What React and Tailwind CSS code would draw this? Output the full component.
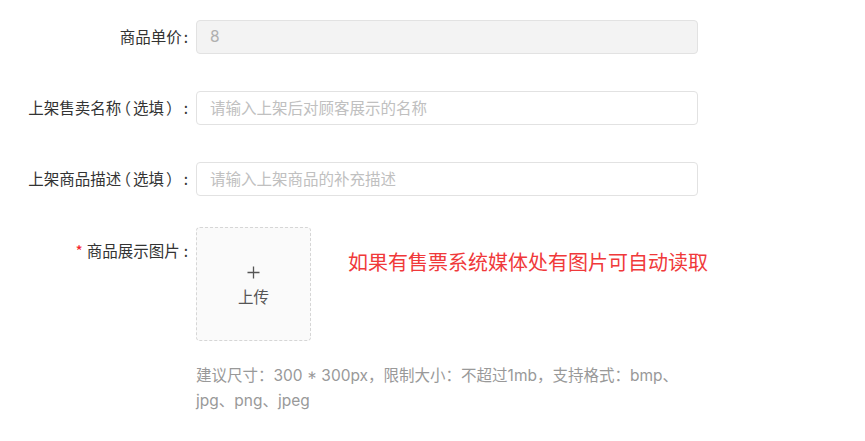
export default function App() {
  const font = { fontFamily: '"PingFang SC", "Noto Sans CJK SC", "Noto Sans", sans-serif' };
  const latin = { fontFamily: '"Inter", "Noto Sans CJK SC", sans-serif' };
  const halt = "[font-feature-settings:'halt'] px-[2px]";
  return (
    <div className="w-[865px] h-[441px] bg-white text-[15.5px]" style={font}>
      <div className="flex flex-col pt-[20px]">
        <div className="flex items-center h-[34px]">
          <div className="w-[188px] text-right text-[#333] whitespace-nowrap">
            商品单价<span className="ml-[2px]">:</span>
          </div>
          <div className="ml-[8px] w-[502px] h-[34px] rounded-[4px] border border-[#e2e2e2] bg-[#f3f3f3] flex items-center px-[13px] text-[#b0b0b0]" style={latin}>8</div>
        </div>
        <div className="flex items-center h-[34px] mt-[37px]">
          <div className="w-[188px] text-right text-[#333] whitespace-nowrap">
            上架售卖名称<span className={halt}>（</span>选填<span className={halt}>）</span><span className="ml-[8px]">:</span>
          </div>
          <div className="ml-[8px] w-[502px] h-[34px] rounded-[4px] border border-[#e2e2e2] bg-white flex items-center px-[13px] text-[#c0c0c0]">请输入上架后对顾客展示的名称</div>
        </div>
        <div className="flex items-center h-[34px] mt-[37px]">
          <div className="w-[188px] text-right text-[#333] whitespace-nowrap">
            上架商品描述<span className={halt}>（</span>选填<span className={halt}>）</span><span className="ml-[8px]">:</span>
          </div>
          <div className="ml-[8px] w-[502px] h-[34px] rounded-[4px] border border-[#e2e2e2] bg-white flex items-center px-[13px] text-[#c0c0c0]">请输入上架商品的补充描述</div>
        </div>
        <div className="flex mt-[31px]">
          <div className="w-[188px] text-right text-[#333] pt-[12px] leading-[22px] whitespace-nowrap">
            <span className="text-[#f5222d] mr-[4px]">*</span>商品展示图片<span className="ml-[4px]">:</span>
          </div>
          <div className="ml-[8px] flex flex-col">
            <div className="flex items-start">
              <div className="w-[115px] h-[114px] rounded-[4px] border border-dashed border-[#d6d6d6] bg-[#fafafa] flex flex-col items-center justify-center text-[#555]">
                <svg width="13" height="13" viewBox="0 0 13 13" className="mt-[4px]">
                  <path d="M6.5 0.5V12.5M0.5 6.5H12.5" stroke="#555" strokeWidth="1.3" fill="none" />
                </svg>
                <div className="mt-[6px] leading-[22px]">上传</div>
              </div>
              <div className="ml-[37px] mt-[23px] text-[20px] leading-[24px] text-[#f0393a] whitespace-nowrap">如果有售票系统媒体处有图片可自动读取</div>
            </div>
            <div className="mt-[22px] text-[15.5px] leading-[25px] text-[#999]" style={latin}>
              建议尺寸：300 * 300px，限制大小：不超过1mb，支持格式：bmp、<br />jpg、png、jpeg
            </div>
          </div>
        </div>
      </div>
    </div>
  );
}
